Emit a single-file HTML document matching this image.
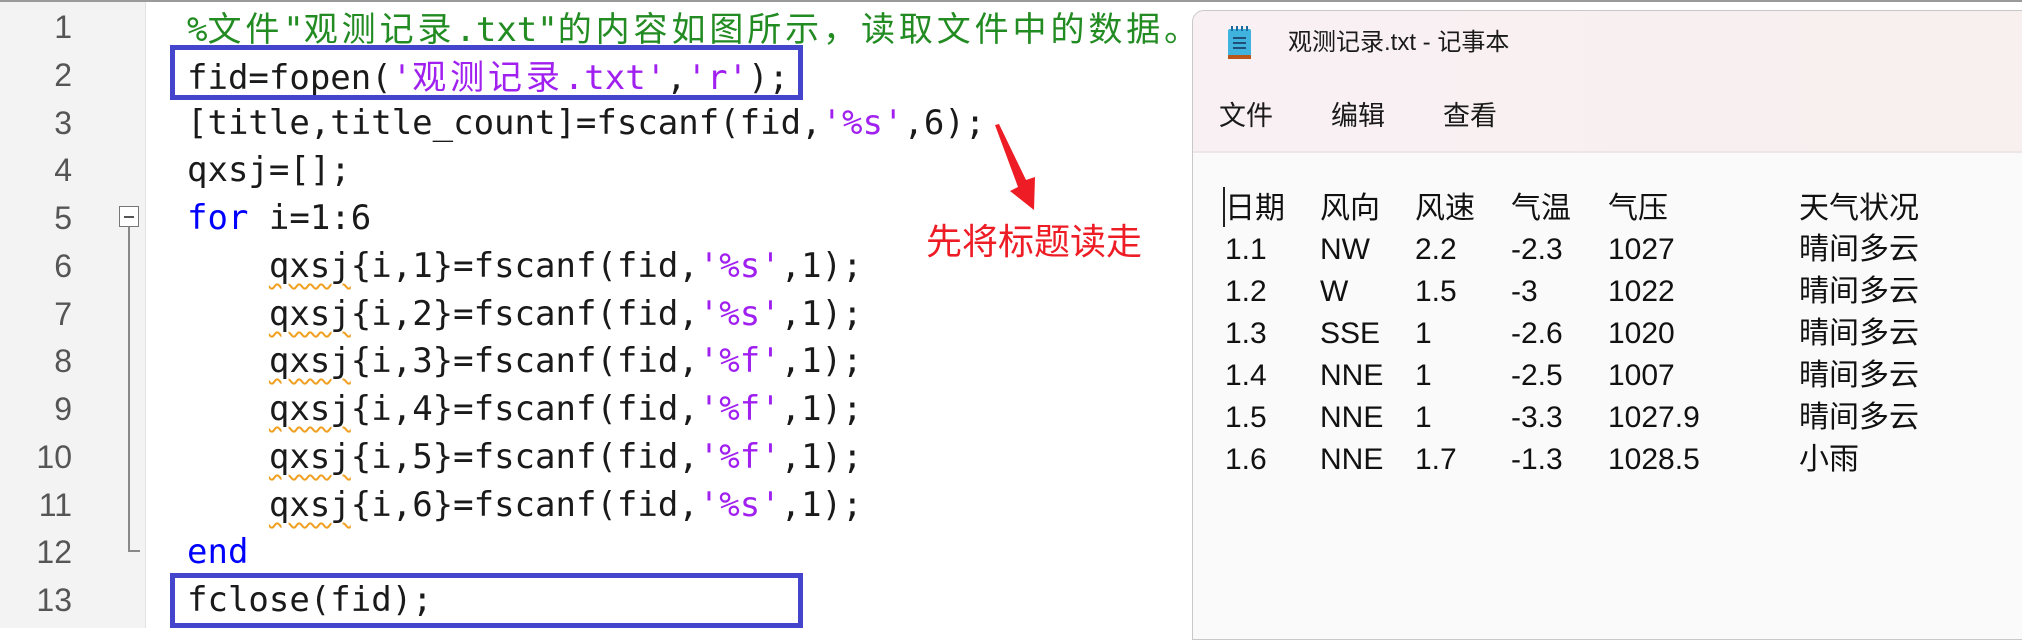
<!DOCTYPE html>
<html><head><meta charset="utf-8">
<style>
*{margin:0;padding:0;box-sizing:border-box}
body{width:2022px;height:628px;overflow:hidden;background:#fff;position:relative;font-family:"Liberation Sans","Noto Sans CJK SC",sans-serif}
.gut{position:absolute;left:0;top:0;width:146px;height:628px;background:#f3f3f3;border-right:1px solid #e2e2e2}
.topline{position:absolute;left:0;top:0;width:2022px;height:2px;background:#9a9a9a}
.ln{position:absolute;font:32px "Liberation Sans",sans-serif;color:#555;line-height:48px;text-align:right;width:60px;left:12px}
.code{position:absolute;left:187px;font:34px "DejaVu Sans Mono","Noto Sans CJK SC",monospace;line-height:48px;color:#1a1a1a;white-space:pre}
.c{font-family:"Noto Sans CJK SC",sans-serif;font-size:34px;letter-spacing:3.9px}
.g{color:#228b22}.p{color:#a020f0}.b{color:#0000ff}
.sq{text-decoration:underline wavy #f0a020;text-decoration-thickness:1.5px;text-underline-offset:6px}
.box{position:absolute;border:5px solid #4444cc}
.np{position:absolute;left:1192px;top:10px;width:840px;height:630px;border:1px solid #c8c8c8;border-radius:12px 0 0 0;background:#fafafa;overflow:hidden}
.tb{position:absolute;left:0;top:0;width:100%;height:142px;background:linear-gradient(90deg,#f8f0f3,#f8f0ee);border-bottom:2px solid #ece6e6}
.t{position:absolute;font-family:"Liberation Sans","Noto Sans CJK SC",sans-serif;color:#1a1a1a;white-space:nowrap}
</style></head><body>
<div class="gut"></div>
<div class="topline"></div>
<div class="ln" style="top:3px">1</div>
<div class="ln" style="top:51px">2</div>
<div class="ln" style="top:99px">3</div>
<div class="ln" style="top:146px">4</div>
<div class="ln" style="top:194px">5</div>
<div class="ln" style="top:242px">6</div>
<div class="ln" style="top:290px">7</div>
<div class="ln" style="top:337px">8</div>
<div class="ln" style="top:385px">9</div>
<div class="ln" style="top:433px">10</div>
<div class="ln" style="top:481px">11</div>
<div class="ln" style="top:528px">12</div>
<div class="ln" style="top:576px">13</div>
<div style="position:absolute;left:119px;top:206px;width:20px;height:21px;border:1.5px solid #777;background:#fff"></div>
<div style="position:absolute;left:124px;top:216px;width:10px;height:1.5px;background:#555"></div>
<div style="position:absolute;left:128px;top:227px;width:1.5px;height:324px;background:#888"></div>
<div style="position:absolute;left:128px;top:550px;width:12px;height:1.5px;background:#888"></div>

<div class="code" style="top:3px"><span class="g">%<span class="c">文件</span>"<span class="c">观测记录</span>.txt"<span class="c">的内容如图所示，读取文件中的数据。</span></span></div>
<div class="code" style="top:51px">fid=fopen(<span class="p">'<span class="c">观测记录</span>.txt'</span>,<span class="p">'r'</span>);</div>
<div class="code" style="top:99px">[title,title_count]=fscanf(fid,<span class="p">'%s'</span>,6);</div>
<div class="code" style="top:146px">qxsj=[];</div>
<div class="code" style="top:194px"><span class="b">for</span> i=1:6</div>
<div class="code" style="top:242px">    <span class="sq">qxsj</span>{i,1}=fscanf(fid,<span class="p">'%s'</span>,1);</div>
<div class="code" style="top:290px">    <span class="sq">qxsj</span>{i,2}=fscanf(fid,<span class="p">'%s'</span>,1);</div>
<div class="code" style="top:337px">    <span class="sq">qxsj</span>{i,3}=fscanf(fid,<span class="p">'%f'</span>,1);</div>
<div class="code" style="top:385px">    <span class="sq">qxsj</span>{i,4}=fscanf(fid,<span class="p">'%f'</span>,1);</div>
<div class="code" style="top:433px">    <span class="sq">qxsj</span>{i,5}=fscanf(fid,<span class="p">'%f'</span>,1);</div>
<div class="code" style="top:481px">    <span class="sq">qxsj</span>{i,6}=fscanf(fid,<span class="p">'%s'</span>,1);</div>
<div class="code" style="top:528px"><span class="b">end</span></div>
<div class="code" style="top:576px">fclose(fid);</div>

<div class="box" style="left:170px;top:45px;width:633px;height:55px"></div>
<div class="box" style="left:170px;top:573px;width:633px;height:55px"></div>

<svg style="position:absolute;left:990px;top:120px" width="60" height="95"><polygon points="5,5 9,4 36,60 45,57 44,90 20,71 28,67" fill="#ee1c24"/></svg>
<div class="t" style="left:926px;top:216px;font-size:36px;color:#ee1c24;font-family:'Noto Sans CJK SC',sans-serif;line-height:46px">先将标题读走</div>

<div class="np">
<div class="tb"></div>
<svg style="position:absolute;left:34px;top:15px" width="26" height="34"><rect x="1" y="3" width="23" height="27" rx="2" fill="#3fb3de"/><rect x="1" y="29" width="23" height="4" fill="#b8561c"/><g fill="#1a6aa0"><rect x="4" y="0" width="2" height="5"/><rect x="9" y="0" width="2" height="5"/><rect x="14" y="0" width="2" height="5"/><rect x="19" y="0" width="2" height="5"/></g><g fill="#1f4f78"><rect x="6" y="11" width="13" height="2"/><rect x="6" y="16" width="13" height="2"/><rect x="6" y="21" width="13" height="2"/></g></svg>
<div class="t" style="left:95px;top:17px;font-size:24px;line-height:30px">观测记录.txt - 记事本</div>
<div class="t" style="left:26px;top:88px;font-size:27px;line-height:34px">文件</div>
<div class="t" style="left:138px;top:88px;font-size:27px;line-height:34px">编辑</div>
<div class="t" style="left:250px;top:88px;font-size:27px;line-height:34px">查看</div>
<div style="position:absolute;left:30px;top:176px;width:1.5px;height:40px;background:#222"></div>
<div class="t" style="left:0;top:0;font-size:30px;line-height:42px;color:#111">
<div style="position:absolute;top:177px;left:32px">日期</div><div style="position:absolute;top:177px;left:127px">风向</div><div style="position:absolute;top:177px;left:222px">风速</div><div style="position:absolute;top:177px;left:318px">气温</div><div style="position:absolute;top:177px;left:415px">气压</div><div style="position:absolute;top:177px;left:606px">天气状况</div>
<div style="position:absolute;top:218px;left:32px">1.1</div><div style="position:absolute;top:218px;left:127px">NW</div><div style="position:absolute;top:218px;left:222px">2.2</div><div style="position:absolute;top:218px;left:318px">-2.3</div><div style="position:absolute;top:218px;left:415px">1027</div><div style="position:absolute;top:218px;left:606px">晴间多云</div>
<div style="position:absolute;top:260px;left:32px">1.2</div><div style="position:absolute;top:260px;left:127px">W</div><div style="position:absolute;top:260px;left:222px">1.5</div><div style="position:absolute;top:260px;left:318px">-3</div><div style="position:absolute;top:260px;left:415px">1022</div><div style="position:absolute;top:260px;left:606px">晴间多云</div>
<div style="position:absolute;top:302px;left:32px">1.3</div><div style="position:absolute;top:302px;left:127px">SSE</div><div style="position:absolute;top:302px;left:222px">1</div><div style="position:absolute;top:302px;left:318px">-2.6</div><div style="position:absolute;top:302px;left:415px">1020</div><div style="position:absolute;top:302px;left:606px">晴间多云</div>
<div style="position:absolute;top:344px;left:32px">1.4</div><div style="position:absolute;top:344px;left:127px">NNE</div><div style="position:absolute;top:344px;left:222px">1</div><div style="position:absolute;top:344px;left:318px">-2.5</div><div style="position:absolute;top:344px;left:415px">1007</div><div style="position:absolute;top:344px;left:606px">晴间多云</div>
<div style="position:absolute;top:386px;left:32px">1.5</div><div style="position:absolute;top:386px;left:127px">NNE</div><div style="position:absolute;top:386px;left:222px">1</div><div style="position:absolute;top:386px;left:318px">-3.3</div><div style="position:absolute;top:386px;left:415px">1027.9</div><div style="position:absolute;top:386px;left:606px">晴间多云</div>
<div style="position:absolute;top:428px;left:32px">1.6</div><div style="position:absolute;top:428px;left:127px">NNE</div><div style="position:absolute;top:428px;left:222px">1.7</div><div style="position:absolute;top:428px;left:318px">-1.3</div><div style="position:absolute;top:428px;left:415px">1028.5</div><div style="position:absolute;top:428px;left:606px">小雨</div>
</div>
</div>
</body></html>
